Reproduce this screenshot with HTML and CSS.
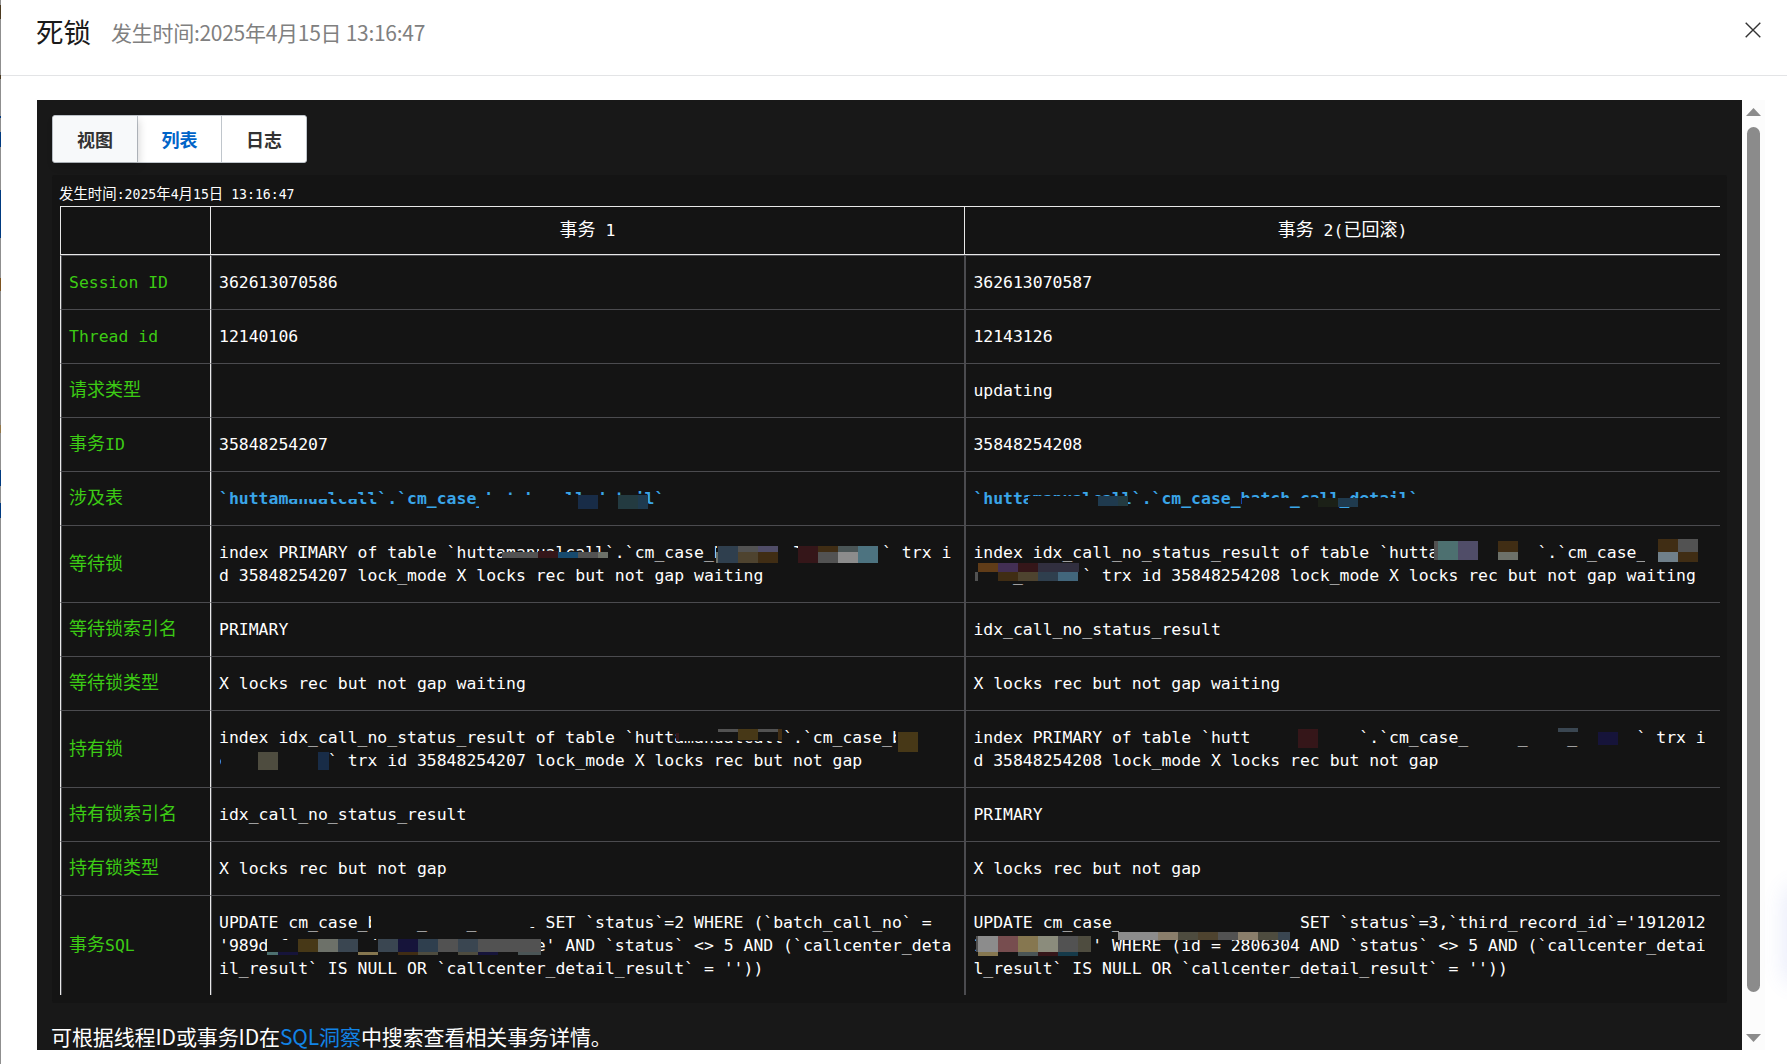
FILE: index.html
```html
<!DOCTYPE html>
<html lang="zh-CN">
<head>
<meta charset="utf-8">
<title>死锁</title>
<link rel="stylesheet" href="styles.css">
</head>
<body>
<div class="drawer">
  <header class="head">
    <h1 class="title">死锁</h1>
    <span class="subtitle">发生时间:2025年4月15日 13:16:47</span>
    <svg class="close" width="16" height="16" viewBox="0 0 16 16"><path d="M.7.7l14.6 14.6M15.3.7L.7 15.3"/></svg>
  </header>
  <div class="body">
    <main class="panel">
      <nav class="tabs">
        <button class="tab tab-hover">视图</button>
        <button class="tab tab-active">列表</button>
        <button class="tab">日志</button>
      </nav>
      <section class="detail">
        <p class="stamp"><b>发生时间</b>:2025<b>年</b>4<b>月</b>15<b>日</b> 13:16:47</p>
        <div class="table-wrap">
          <table class="locks">
            <colgroup><col class="c-label"><col class="c-one"><col class="c-two"></colgroup>
            <thead><tr><th></th><th><b>事务</b> 1</th><th><b>事务</b> 2(<b>已回滚</b>)</th></tr></thead>
            <tbody>
              <tr><td>Session ID</td><td>362613070586</td><td>362613070587</td></tr>
              <tr><td>Thread id</td><td>12140106</td><td>12143126</td></tr>
              <tr><td><b>请求类型</b></td><td></td><td>updating</td></tr>
              <tr><td><b>事务</b>ID</td><td>35848254207</td><td>35848254208</td></tr>
              <tr><td><b>涉及表</b></td><td class="tbl">`huttamanualcall`.`cm_case_batch_call_detail`</td><td class="tbl">`huttamanualcall`.`cm_case_batch_call_detail`</td></tr>
              <tr><td><b>等待锁</b></td><td>index PRIMARY of table `huttamanualcall`.`cm_case_batch_call_detail` trx i<br>d 35848254207 lock_mode X locks rec but not gap waiting</td><td>index idx_call_no_status_result of table `huttamanualcall`.`cm_case_batch_<br>call_detail` trx id 35848254208 lock_mode X locks rec but not gap waiting</td></tr>
              <tr><td><b>等待锁索引名</b></td><td>PRIMARY</td><td>idx_call_no_status_result</td></tr>
              <tr><td><b>等待锁类型</b></td><td>X locks rec but not gap waiting</td><td>X locks rec but not gap waiting</td></tr>
              <tr><td><b>持有锁</b></td><td>index idx_call_no_status_result of table `huttamanualcall`.`cm_case_batch_<br>call_detail` trx id 35848254207 lock_mode X locks rec but not gap</td><td>index PRIMARY of table `huttamanualcall`.`cm_case_batch_call_detail` trx i<br>d 35848254208 lock_mode X locks rec but not gap</td></tr>
              <tr><td><b>持有锁索引名</b></td><td>idx_call_no_status_result</td><td>PRIMARY</td></tr>
              <tr><td><b>持有锁类型</b></td><td>X locks rec but not gap</td><td>X locks rec but not gap</td></tr>
              <tr><td><b>事务</b>SQL</td><td>UPDATE cm_case_batch_call_detail SET `status`=2 WHERE (`batch_call_no` =<br>'989d f  b     db      b       de' AND `status` &lt;&gt; 5 AND (`callcenter_deta<br>il_result` IS NULL OR `callcenter_detail_result` = ''))</td><td>UPDATE cm_case_batch_call_detail SET `status`=3,`third_record_id`='1912012<br>1           ' WHERE (id = 2806304 AND `status` &lt;&gt; 5 AND (`callcenter_detai<br>l_result` IS NULL OR `callcenter_detail_result` = ''))</td></tr>
            </tbody>
          </table>
          <!-- redaction mosaic over the private names -->
          <svg class="mosaic" viewBox="60 206 1660 789" shape-rendering="crispEdges">
            <g fill="#141414">
              <path d="M288 495h88v4h-88zM479 495h169v16h-169z"/>
              <path d="M1028 496h70v14h-70zM1242 498h178v8h-178z"/>
              <path d="M716 548h162v15h-162zM870 548h13v10h-13z"/>
              <path d="M1434 541h105v22h-105zM1645 539h66v23h-66zM974 563h108v18h-108z"/>
              <path d="M678 731h104v10h-104zM896 728h60v24h-60zM221 752h107v22h-107z"/>
              <path d="M1251 728h109v24h-109zM1468 728h169v16h-169z"/>
              <path d="M371 912h159v18h-159zM520 912h17v15h-17zM267 940h274v15h-274z"/>
              <path d="M1119 912h178v26h-178zM976 936h116v20h-116z"/>
            </g>
            <g fill="#182c47"><path d="M578 495h20v14h-20zM318 752h11v18h-11z"/></g>
            <g fill="#233a40"><path d="M618 495h20v14h-20zM1118 496h10v10h-10z"/></g>
            <g fill="#1f3a4e"><path d="M638 495h10v14h-10zM1098 496h20v10h-20zM1338 498h20v9h-20z"/></g>
            <g fill="#1b2017"><path d="M1318 498h20v9h-20z"/></g>
            <g fill="#525252"><path d="M502 552h36v6h-36zM578 552h20v6h-20zM738 546h20v6h-20zM818 552h20v11h-20zM1678 539h20v13h-20zM975 572h3v9h-3zM718 729h20v3h-20zM758 729h20v3h-20zM438 939h20v13h-20zM478 939h63v13h-63zM1218 932h20v8h-20zM976 936h2v16h-2zM1058 936h20v16h-20zM1434 541h4v19h-4z"/></g>
            <g fill="#351619"><path d="M538 551h20v7h-20zM798 546h20v17h-20zM1018 563h20v9h-20zM676 733h3v8h-3zM1298 729h20v19h-20zM1038 952h20v4h-20z"/></g>
            <g fill="#174a6e"><path d="M558 552h20v6h-20z"/></g>
            <g fill="#6d7169"><path d="M598 552h10v6h-10zM716 552h2v11h-2zM1498 552h20v8h-20zM318 939h20v13h-20z"/></g>
            <g fill="#2f3f4e"><path d="M718 546h20v17h-20zM1038 572h20v9h-20zM418 939h20v13h-20z"/></g>
            <g fill="#4e432f"><path d="M738 552h20v11h-20zM1018 572h20v9h-20zM1198 932h20v8h-20z"/></g>
            <g fill="#504d68"><path d="M758 546h20v6h-20zM1458 541h20v19h-20z"/></g>
            <g fill="#402d14"><path d="M758 552h20v11h-20zM818 546h20v6h-20zM1498 541h20v11h-20zM1658 539h20v13h-20zM1678 552h20v10h-20zM998 572h20v9h-20zM778 729h4v11h-4zM398 952h20v3h-20z"/></g>
            <g fill="#4a5556"><path d="M838 546h20v6h-20zM518 952h23v3h-23zM1018 952h20v4h-20z"/></g>
            <g fill="#8c8c8c"><path d="M838 552h20v11h-20zM1118 932h40v8h-40zM978 936h20v16h-20z"/></g>
            <g fill="#4d7380"><path d="M858 546h20v17h-20z"/></g>
            <g fill="#42667c"><path d="M1058 572h20v9h-20z"/></g>
            <g fill="#4d7070"><path d="M1438 541h20v19h-20zM267 952h11v3h-11z"/></g>
            <g fill="#70808a"><path d="M1658 552h20v10h-20z"/></g>
            <g fill="#603c18"><path d="M978 563h20v9h-20z"/></g>
            <g fill="#432f54"><path d="M998 563h20v9h-20z"/></g>
            <g fill="#312f3f"><path d="M1038 563h41v9h-41z"/></g>
            <g fill="#473817"><path d="M738 729h20v11h-20zM898 732h20v20h-20zM298 939h20v13h-20z"/></g>
            <g fill="#4e4c3f"><path d="M258 752h20v18h-20zM418 952h20v3h-20zM458 952h20v3h-20zM1178 932h20v8h-20zM1258 932h20v8h-20zM1078 936h13v16h-13z"/></g>
            <g fill="#3a4651"><path d="M1558 728h20v4h-20zM338 939h20v13h-20zM378 939h20v13h-20zM458 939h20v13h-20zM1278 932h12v8h-12z"/></g>
            <g fill="#16143a"><path d="M1598 732h20v13h-20zM398 939h20v13h-20zM278 952h20v3h-20zM478 952h20v3h-20z"/></g>
            <g fill="#867750"><path d="M358 952h20v3h-20zM1018 936h20v16h-20zM978 952h20v4h-20z"/></g>
            <g fill="#8a7e6b"><path d="M1158 932h20v8h-20zM1238 932h20v8h-20z"/></g>
            <g fill="#774d4f"><path d="M998 936h20v16h-20z"/></g>
            <g fill="#8b8c7c"><path d="M1038 936h20v16h-20z"/></g>
            <g fill="#153a4a"><path d="M1058 952h20v4h-20z"/></g>
          </svg>
        </div>
      </section>
      <p class="hint">可根据线程ID或事务ID在<a class="link">SQL洞察</a>中搜索查看相关事务详情。</p>
    </main>
    <div class="scrollbar">
      <svg width="15" height="8" viewBox="0 0 15 8"><path d="M7.5 0L15 8H0z"/></svg>
      <div class="thumb"></div>
      <svg width="15" height="8" viewBox="0 0 15 8"><path d="M0 0h15L7.500 8z"/></svg>
    </div>
  </div>
  <div class="glow"></div>
</div>
</body>
</html>
```
FILE: styles.css
```css
* { box-sizing: border-box; }
body {
  margin: 0;
  height: 1064px;
  overflow: hidden;
  display: flex;
  background: #fff;
  font-family: "Noto Sans CJK SC", sans-serif;
}
/* sliver of the page behind the drawer */
body::before {
  content: "";
  width: 1px;
  background: linear-gradient(#8f8f8f 5px, #4b3a20 5px 19px, #8f8f8f 19px 75px, #4b3a20 75px 79px, #8f8f8f 79px 116px, #003a80 116px 118px, #8f8f8f 118px 132px, #003a80 132px 147px, #8f8f8f 147px 190px, #003a80 190px 238px, #8f8f8f 238px 278px, #7d5420 278px 291px, #8f8f8f 291px 425px, #947848 425px 433px, #8f8f8f 433px 470px, #003a80 470px 486px, #8f8f8f 486px 503px, #003a80 503px 518px, #8f8f8f 518px);
}
.drawer { flex: 1; position: relative; overflow: hidden; }
.head {
  height: 76px;
  padding: 0 26px 12px 35px;
  display: flex;
  align-items: center;
  border-bottom: 1px solid #e3e4e6;
}
.title { margin: -2px 20px 0 0; font-size: 27.5px; font-weight: 400; line-height: 40px; color: #1a1a1a; }
.subtitle { margin-top: 1px; font-size: 21px; line-height: 30px; letter-spacing: -.28px; color: #808080; white-space: pre; }
.close { margin: -3px 0 0 auto; fill: none; stroke: #333; stroke-width: 1.4; }
.body { display: flex; height: 950px; margin: 24px 0 0 36px; }
.panel { width: 1705px; padding: 15px 15px 0; background: #181818; overflow: hidden; }
.tabs {
  display: flex;
  width: 255px;
  height: 48px;
  border: 1px solid #c0c6cc;
  border-radius: 3px;
  background: #fff;
}
.tab {
  width: 84px;
  padding: 0;
  border: 0;
  border-left: 1px solid #c0c6cc;
  background: #fff;
  font: 700 18px "Noto Sans CJK SC", sans-serif;
  color: #333;
}
.tab:first-child { border-left: 0; border-radius: 3px 0 0 3px; }
.tab:last-child { width: 85px; border-radius: 0 3px 3px 0; }
.tab-hover { position: relative; background: #f7f9fa; box-shadow: 2px 4px 8px rgba(0, 0, 0, .16); }
.tab-active { color: #0064c8; }
.detail {
  height: 828px;
  margin-top: 12px;
  padding: 7px 7px 0 8px;
  border-radius: 3px;
  background: #141414;
  color: #fff;
  font-family: "DejaVu Sans Mono", "Noto Sans CJK SC", monospace;
}
.detail b { font-weight: 400; font-size: 1.095em; line-height: 1; }
.stamp { margin: 0 0 0 -1px; height: 24px; font-size: 13.16px; line-height: 26px; white-space: pre; }
.table-wrap { position: relative; width: 1660px; }
.locks { width: 1660px; table-layout: fixed; border-collapse: separate; border-spacing: 0; font-size: 16.44px; line-height: 23px; }
.c-label { width: 150px; }
.c-one { width: 754px; }
.c-two { width: 756px; }
.locks th {
  height: 49px;
  padding: 0;
  border: 1px solid #e8e8e8;
  border-width: 1px 0 1px 1px;
  font-weight: 400;
}
.locks td {
  padding: 15px 0 15px 8px;
  border-left: 1px solid #e8e8e8;
  border-bottom: 1px solid #4b4b4f;
  box-shadow: inset 1px 0 #4b4b4f;
  white-space: pre;
  height: 54px;
}
.locks td:nth-child(3) { border-left-color: #4b4b4f; padding-left: 8.4px; }
.locks tbody tr:first-child td { height: 55px; border-top: 1px solid #4b4b4f; }
.locks tbody tr:last-child td { border-bottom: 0; }
.locks td:first-child { color: #3ccb14; }
.locks .tbl { color: #3aa5e8; font-weight: 700; }
.mosaic { position: absolute; left: 0; top: 0; width: 1660px; height: 789px; }
.hint { margin: 20px 0 0 -1px; font-size: 21px; line-height: 26px; letter-spacing: -.1px; color: #fff; white-space: nowrap; }
.link { color: #1283e6; }
.scrollbar { width: 23px; padding: 8px 4px; display: flex; flex-direction: column; background: #fcfcfc; }
.scrollbar svg { fill: #8b8b8b; flex: none; }
.thumb { width: 13px; height: 865px; margin: 11px 0 42px 1px; border-radius: 7px; background: #8b8b8b; }
.glow { position: absolute; left: 1787px; top: 890px; width: 20px; height: 90px; border-radius: 10px; box-shadow: 0 0 22px 4px rgba(90, 110, 220, .14); }
```
